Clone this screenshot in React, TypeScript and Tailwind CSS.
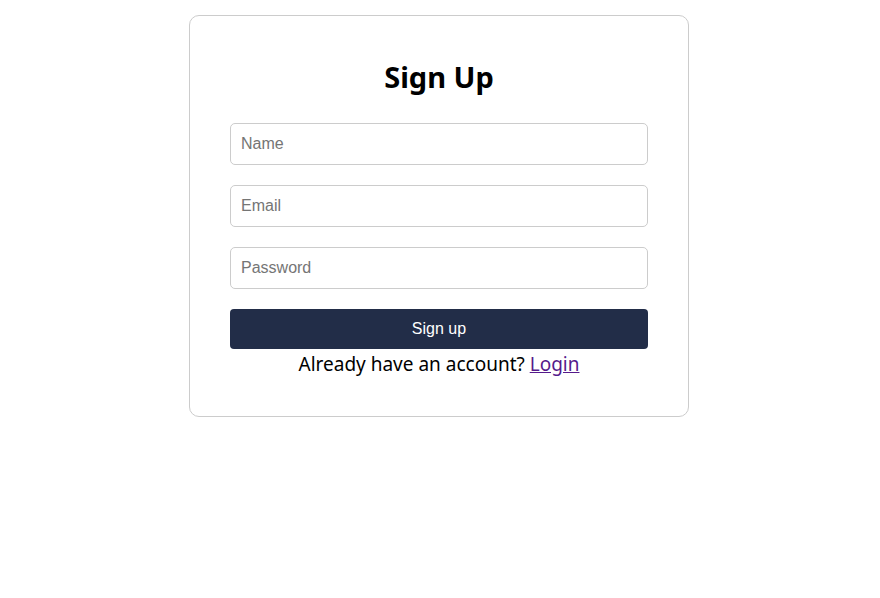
export default function App() {
    return (
        <div className="min-h-screen bg-white flex justify-center pt-[15px] pr-[2px]">
            <div className="w-[500px] h-fit border border-[#cccccc] rounded-[10px] px-10 pt-10 pb-[38px] flex flex-col">
                <h2 className="text-center text-[29px] leading-[42px] font-bold text-black mb-[25px] font-['Noto_Sans',sans-serif]">
                    Sign Up
                </h2>
                <form className="flex flex-col gap-5">
                    <input
                        type="text"
                        placeholder="Name"
                        className="h-[42px] w-full border border-[#cccccc] rounded-[5px] px-[10px] text-base text-black placeholder:text-[#757575] font-['Liberation_Sans',Arial,sans-serif] outline-none"
                    />
                    <input
                        type="email"
                        placeholder="Email"
                        className="h-[42px] w-full border border-[#cccccc] rounded-[5px] px-[10px] text-base text-black placeholder:text-[#757575] font-['Liberation_Sans',Arial,sans-serif] outline-none"
                    />
                    <input
                        type="password"
                        placeholder="Password"
                        className="h-[42px] w-full border border-[#cccccc] rounded-[5px] px-[10px] text-base text-black placeholder:text-[#757575] font-['Liberation_Sans',Arial,sans-serif] outline-none"
                    />
                    <button
                        type="button"
                        className="h-10 w-full bg-[#222d48] text-white rounded-[4px] text-base font-['Liberation_Sans',Arial,sans-serif]"
                    >
                        Sign up
                    </button>
                </form>
                <p className="mt-[2px] text-center text-[19px] leading-[27px] text-black font-['Noto_Sans',sans-serif]">
                    Already have an account?{' '}
                    <a href="#" className="text-[#551a8b] underline">
                        Login
                    </a>
                </p>
            </div>
        </div>
    );
}
